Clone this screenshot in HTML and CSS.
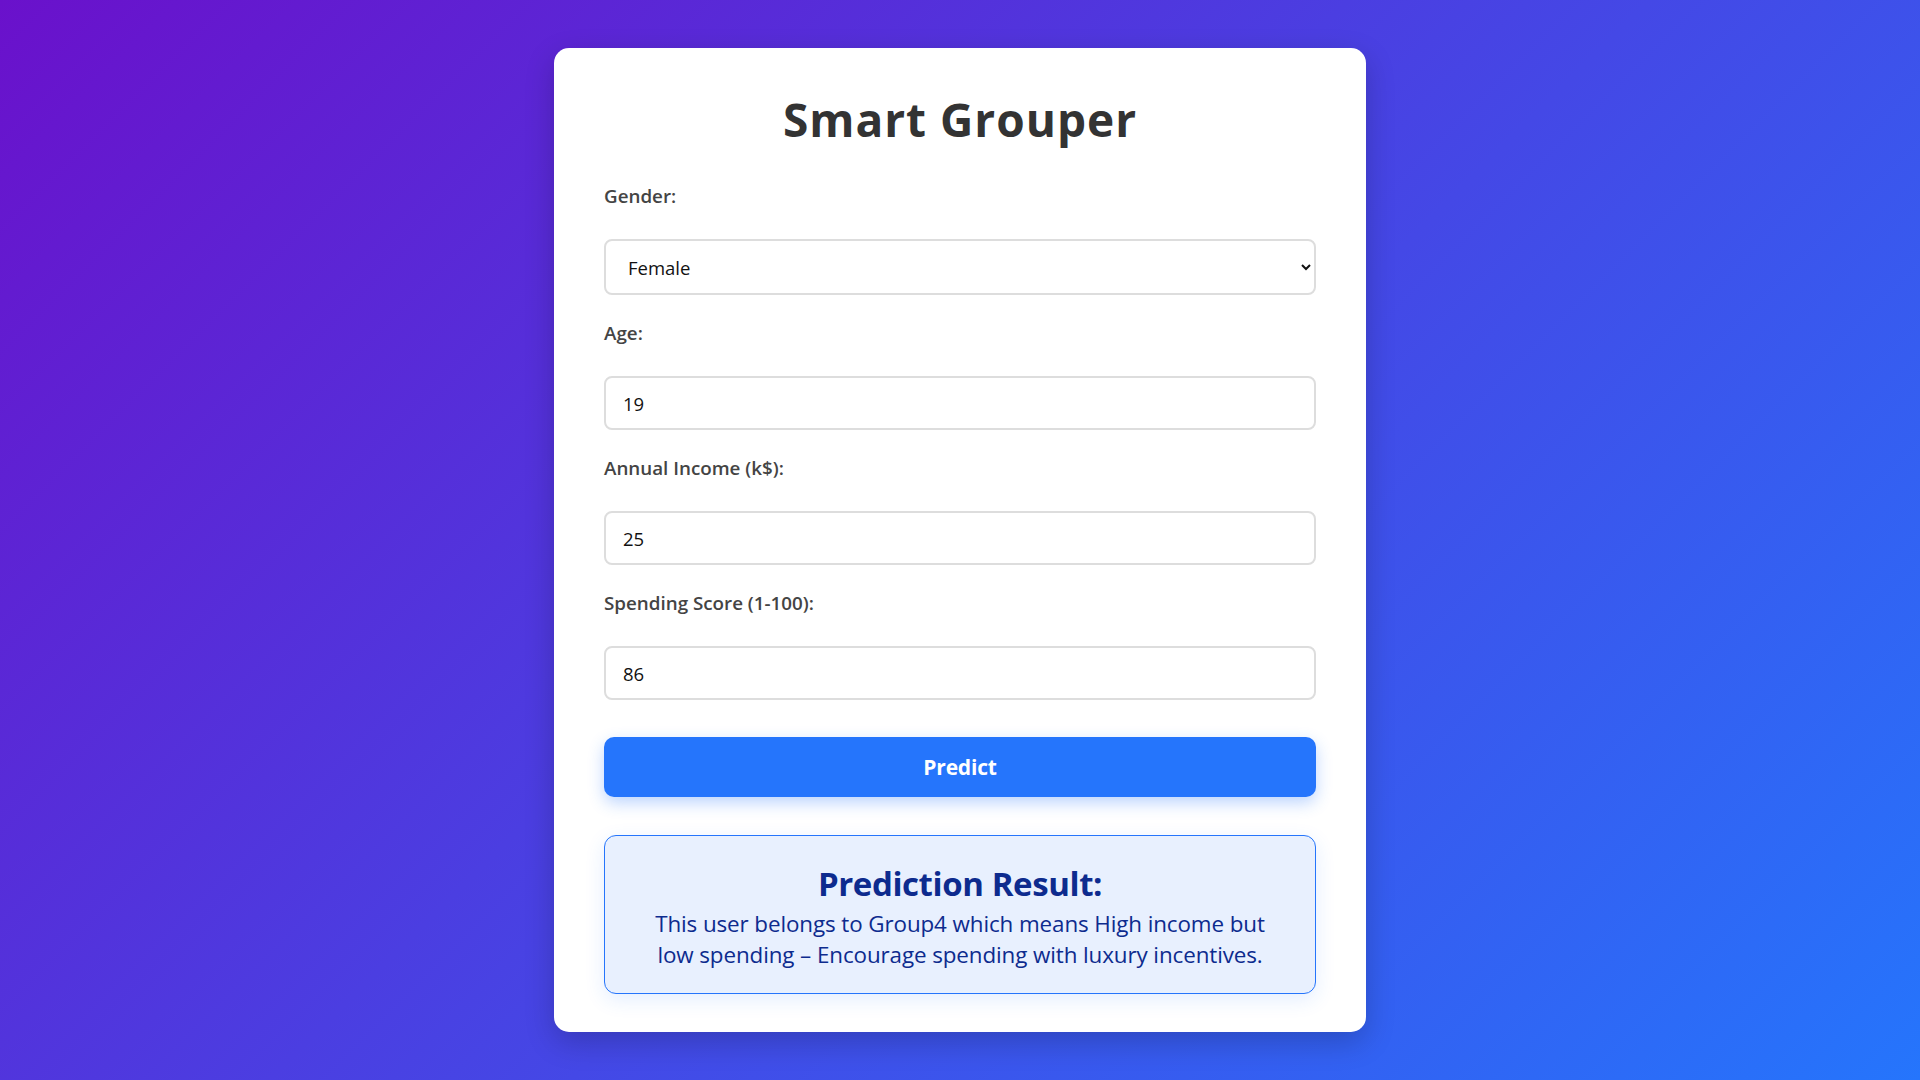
FILE: index.html
```html
<!DOCTYPE html>
<html lang="en">
<head>
<meta charset="UTF-8">
<title>Smart Grouper</title>
<link rel="stylesheet" href="styles.css">
</head>
<body>
  <main class="card">
    <h1 class="title">Smart Grouper</h1>
    <form class="form">
      <div class="field">
        <label class="label" for="gender">Gender:</label>
        <select class="control select" id="gender">
          <option>Female</option>
          <option>Male</option>
        </select>
      </div>
      <div class="field">
        <label class="label" for="age">Age:</label>
        <input class="control" id="age" type="text" value="19">
      </div>
      <div class="field">
        <label class="label" for="income">Annual Income (k$):</label>
        <input class="control" id="income" type="text" value="25">
      </div>
      <div class="field">
        <label class="label" for="score">Spending Score (1-100):</label>
        <input class="control" id="score" type="text" value="86">
      </div>
      <button class="btn" type="button">Predict</button>
    </form>
    <section class="result">
      <h2 class="result-title">Prediction Result:</h2>
      <p class="result-text">This user belongs to Group4 which means High income but low spending – Encourage spending with luxury incentives.</p>
    </section>
  </main>
</body>
</html>
```
FILE: styles.css
```css
* { box-sizing: border-box; }

html, body {
  margin: 0;
  height: 100%;
}

body {
  display: flex;
  align-items: center;
  justify-content: center;
  background: linear-gradient(135deg, #6a11cb 0%, #2575fc 100%);
  font-family: "Open Sans", "Noto Sans", sans-serif;
  color: #333;
}

.card {
  width: 812px;
  background: #fff;
  border-radius: 15px;
  padding: 39px 50px 38px;
  box-shadow: 0 10px 30px rgba(0, 0, 0, 0.2);
}

.title {
  margin: 0 0 32px;
  text-align: center;
  font-size: 46px;
  line-height: 65px;
  font-weight: 700;
  letter-spacing: 1px;
  color: #333;
}

.form {
  display: flex;
  flex-direction: column;
}

.field {
  display: flex;
  flex-direction: column;
  margin-bottom: 26px;
}

.label {
  font-size: 18.8px;
  line-height: 24px;
  font-weight: 600;
  color: #444;
  margin-bottom: 31px;
}

.control {
  width: 100%;
  height: 54px;
  border: 2px solid #ddd;
  border-radius: 8px;
  padding: 0 17px;
  font-family: "Open Sans", "Noto Sans", sans-serif;
  font-size: 18.5px;
  color: #111;
  background: #fff;
  outline: none;
}

.select {
  height: 56px;
  padding-left: 18px;
}

.btn {
  margin-top: 11px;
  height: 60px;
  border: none;
  border-radius: 10px;
  background: #2575fc;
  color: #fff;
  font-family: "Open Sans", "Noto Sans", sans-serif;
  font-size: 21px;
  font-weight: 700;
  letter-spacing: -0.2px;
  box-shadow: 0 6px 16px rgba(37, 117, 252, 0.3);
}

.result {
  margin-top: 38px;
  height: 159px;
  border: 1px solid #2575fc;
  border-radius: 12px;
  background: #e8f0fe;
  padding: 26px 34px 20px;
  text-align: center;
  color: #0d2b8e;
  box-shadow: 0 6px 20px rgba(37, 117, 252, 0.12);
}

.result-title {
  margin: 0 0 2px;
  font-size: 33px;
  line-height: 44px;
  font-weight: 700;
  letter-spacing: -0.4px;
}

.result-text {
  margin: 0;
  font-size: 22.4px;
  line-height: 31px;
  letter-spacing: -0.1px;
}
```
